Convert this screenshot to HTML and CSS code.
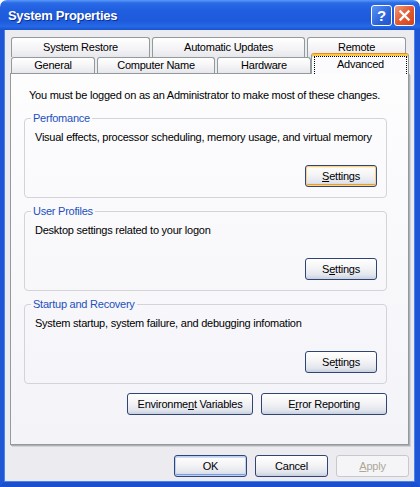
FILE: index.html
```html
<!DOCTYPE html>
<html lang="en">
<head>
<meta charset="utf-8">
<title>System Properties</title>
<link rel="stylesheet" href="styles.css">
</head>
<body>
<div class="window">
  <div class="titlebar">
    <span class="title">System Properties</span>
    <div class="caption">
      <span class="capbtn help">?</span>
      <span class="capbtn close"><svg width="19" height="19" viewBox="0 0 19 19"><path d="M5.5 5.5L13.5 13.5M13.5 5.5L5.5 13.5" stroke="#fff" stroke-width="2.4" stroke-linecap="square"/></svg></span>
    </div>
  </div>

  <div class="client">
    <div class="tabs">
      <div class="tabrow back">
        <div class="tab w-restore">System Restore</div>
        <div class="tab w-updates">Automatic Updates</div>
        <div class="tab w-remote">Remote</div>
      </div>
      <div class="tabrow front">
        <div class="tab w-general">General</div>
        <div class="tab w-compname">Computer Name</div>
        <div class="tab w-hardware">Hardware</div>
        <div class="tab selected"><span class="focus">Advanced</span></div>
      </div>
    </div>

    <div class="panel">
      <p class="intro">You must be logged on as an Administrator to make most of these changes.</p>

      <fieldset class="group">
        <legend>Perfomance</legend>
        <p class="desc">Visual effects, processor scheduling, memory usage, and virtual memory</p>
        <div class="group-actions"><button class="btn hot"><u>S</u>ettings</button></div>
      </fieldset>

      <fieldset class="group">
        <legend>User Profiles</legend>
        <p class="desc">Desktop settings related to your logon</p>
        <div class="group-actions"><button class="btn">S<u>e</u>ttings</button></div>
      </fieldset>

      <fieldset class="group">
        <legend>Startup and Recovery</legend>
        <p class="desc">System startup, system failure, and debugging infomation</p>
        <div class="group-actions"><button class="btn">Se<u>t</u>tings</button></div>
      </fieldset>

      <div class="panel-actions">
        <button class="btn wide">Environme<u>n</u>t Variables</button>
        <button class="btn wide">E<u>r</u>ror Reporting</button>
      </div>
    </div>

    <div class="dialog-actions">
      <button class="btn default">OK</button>
      <button class="btn">Cancel</button>
      <button class="btn" disabled><u>A</u>pply</button>
    </div>
  </div>
</div>
</body>
</html>
```

FILE: styles.css
```css
body {
	margin: 0;
	background: #fff;
	font-family: "Liberation Sans", Arial, sans-serif;
	font-size: 11px;
	letter-spacing: -0.24px;
	color: #000;
}

.window {
	width: 420px;
	height: 487px;
	box-sizing: border-box;
	display: flex;
	flex-direction: column;
}

/* title bar */
.titlebar {
	height: 30px;
	flex: none;
	display: flex;
	align-items: center;
	justify-content: space-between;
	padding: 0 5px 0 8px;
	border-radius: 7px 7px 0 0;
	background: linear-gradient(#5a9af7 0%, #2a6ae6 10%, #1f5edf 35%, #1d5bdc 70%, #2669e6 88%, #1a52cf 100%);
}
.title {
	color: #fff;
	font-weight: bold;
	font-size: 13px;
	letter-spacing: -0.3px;
	text-shadow: 1px 1px 0 #0c2f96;
	margin-top: 1px;
}
.caption {
	display: flex;
	gap: 2px;
	margin-top: 1px;
}
.capbtn {
	width: 19px;
	height: 19px;
	border: 1px solid #fff;
	border-radius: 3px;
	display: flex;
	align-items: center;
	justify-content: center;
}
.help {
	background: linear-gradient(135deg, #5d94f0, #2c64dc 60%, #2357cc);
	color: #fff;
	font-weight: bold;
	font-size: 15px;
}
.close {
	background: linear-gradient(135deg, #f09a78, #e35a33 50%, #cf4318);
}

/* client area */
.client {
	flex: 1;
	display: flex;
	flex-direction: column;
	padding: 7px 6px 5px 6px;
	background: #ecebef;
	border-left: 4px solid #1f56d6;
	border-right: 5px solid #1f56d6;
	border-bottom: 5px solid #1b4fcd;
	box-shadow: inset 1px 0 0 #4b83ee, inset -1px 0 0 #4b83ee, inset 0 -1px 0 #4b83ee;
}

/* tabs */
.tabrow {
	display: flex;
	gap: 2px;
	padding-left: 1px;
}
.tabrow.back { height: 20px; }
.tabrow.front { height: 16px; }
.tab {
	box-sizing: border-box;
	border: 1px solid #919b9c;
	border-bottom: none;
	border-radius: 3px 3px 0 0;
	background: linear-gradient(#ffffff, #f3f3f6 60%, #e6e6ec);
	text-align: center;
}
.back .tab { height: 20px; line-height: 19px; }
.front .tab { height: 16px; line-height: 15px; }
.w-restore { width: 139px; }
.w-updates { width: 153px; }
.w-remote { width: 99px; }
.w-general { width: 84px; }
.w-compname { width: 118px; }
.w-hardware { width: 94px; }
.front .tab.selected {
	width: 98px;
	height: 21px;
	margin: -4px 0 0 -2px;
	padding: 2px 1px 0 2px;
	line-height: 16px;
	background: #fbfbfd;
	border-top: 1px solid #e68b2c;
	box-shadow: inset 0 2px 0 #ffc73c;
	position: relative;
	z-index: 1;
}
.focus {
	display: block;
	border: 1px dotted #000;
	border-bottom: none;
	height: 17px;
	line-height: 15px;
}

/* panel */
.panel {
	flex: none;
	height: 372px;
	box-sizing: border-box;
	border: 1px solid #919b9c;
	background: linear-gradient(#fdfdfe, #f4f3f8);
	box-shadow: 1px 1px 0 #aeb0b8, 2px 2px 0 #d4d3da;
	padding: 15px 21px 0 13px;
}
.intro {
	margin: 0 0 10px 5px;
	line-height: 13px;
	white-space: nowrap;
}

.group {
	margin: 0 0 7px 0;
	padding: 0 9px 10px 9px;
	border: 1px solid #d3d3d8;
	border-radius: 4px;
	min-inline-size: 0;
}
.group legend {
	padding: 0 2px;
	margin-left: -3px;
	line-height: 13px;
	color: #2150bd;
}
.desc {
	margin: 6px 0 21px 1px;
	line-height: 13px;
	white-space: nowrap;
}
.group-actions,
.panel-actions,
.dialog-actions {
	display: flex;
	justify-content: flex-end;
	gap: 8px;
}
.panel-actions { margin-top: 9px; }
.dialog-actions { margin-top: 10px; }

/* buttons */
.btn {
	width: 73px;
	height: 22px;
	box-sizing: border-box;
	padding: 0;
	font: 11px "Liberation Sans", Arial, sans-serif;
	letter-spacing: -0.24px;
	color: #000;
	border: 1px solid #2f4675;
	border-radius: 3px;
	background: linear-gradient(#ffffff, #f4f4f6 45%, #e3e6ee 80%, #c9d0de);
}
.group .btn { width: 72px; }
.btn.wide { width: 126px; }
.btn.hot {
	box-shadow: inset 0 0 0 1px #f8d28a, inset 0 -2px 0 #e5a02e, inset 0 2px 0 #fff0cf;
}
.btn.default {
	box-shadow: inset 0 0 0 1px #bcd0f4, inset 0 -2px 0 #7b9be4, inset 0 2px 0 #cedcf8;
}
.btn:disabled {
	border-color: #c9c8cf;
	background: #f5f4f7;
	color: #aca899;
}
```
